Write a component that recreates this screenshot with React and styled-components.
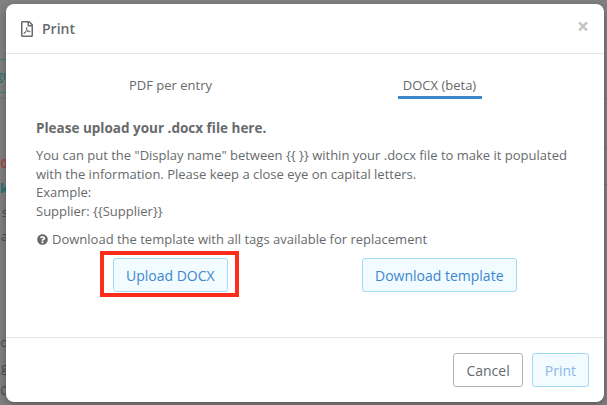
import React from "react";
import styled, { createGlobalStyle } from "styled-components";
import { FaQuestionCircle, FaRegFilePdf } from "react-icons/fa";

const Global = createGlobalStyle`
  html, body {
    margin: 0;
    height: 100%;
    overflow: hidden;
    background: #808080;
    font-family: "Open Sans", "Noto Sans", sans-serif;
  }
`;

const Overlay = styled.div`
  position: relative;
  box-sizing: border-box;
  width: 607px;
  height: 405px;
  overflow: hidden;
  padding: 4px 3px 3px 6px;
  background: #808080;
`;

// what is left of the page behind the dimmed overlay
const Scrap = styled.span`
  position: absolute;
  top: ${(p) => p.$top}px;
  left: 0;
  width: 8px;
  overflow: hidden;
  direction: rtl;
  font-size: 13px;
  line-height: 16px;
  font-weight: ${(p) => (p.$bold ? 700 : 400)};
  color: ${(p) => p.$color || "#4a4a4a"};
`;

const Rule = styled.div`
  position: absolute;
  top: ${(p) => p.$top}px;
  left: ${(p) => (p.$right ? "604px" : "0")};
  width: ${(p) => (p.$right ? "3px" : "6px")};
  height: 1px;
  background: ${(p) => p.$color || "#727272"};
`;

const Modal = styled.div`
  position: relative;
  height: 100%;
  display: flex;
  flex-direction: column;
  background: #fff;
  border-radius: 8px;
  box-shadow: 0 3px 9px rgba(0, 0, 0, 0.3);
`;

const Header = styled.div`
  height: 50px;
  flex: none;
  box-sizing: border-box;
  display: flex;
  align-items: center;
  padding: 0 15px 0 13px;
  border-bottom: 1px solid #e5e5e5;
`;

const Title = styled.h4`
  flex: 1;
  margin: 0 0 0 7px;
  font-size: 14px;
  font-weight: 600;
  color: #676a6c;
`;

const Close = styled.span`
  margin-top: -4px;
  font-size: 21px;
  line-height: 1;
  font-weight: 700;
  color: #c4c4c4;
`;

const Body = styled.div`
  flex: 1;
  padding: 0 30px;
  color: #676a6c;
  font-size: 13px;
  line-height: 18.6px;
`;

const Tabs = styled.div`
  display: grid;
  grid-template-columns: 1fr 1fr;
  margin: 22px 0 0;
  text-align: center;
`;

const Tab = styled.div`
  justify-self: center;
  box-sizing: border-box;
  height: 23px;
  padding: 0 0 2px;
  width: ${(p) => (p.$active ? "84px" : "auto")};
  line-height: 18px;
  white-space: nowrap;
  border-bottom: 3px solid ${(p) => (p.$active ? "#3c87ce" : "transparent")};
  font-size: 13px;
`;

const Heading = styled.p`
  margin: 20px 0 9px;
  font-weight: 700;
  font-size: 13.5px;
  line-height: 18px;
`;

const Text = styled.p`
  margin: 0;
`;

const Hint = styled.p`
  display: flex;
  align-items: center;
  gap: 4px;
  margin: 10px 0 3px;
  padding-left: 1px;
  line-height: 18px;
`;

const Actions = styled.div`
  display: grid;
  grid-template-columns: 1fr 1fr;
`;

const Highlight = styled.div`
  justify-self: start;
  margin-left: 64px;
  padding: 3px 7px 1px 9px;
  border: 4px solid #fe2d1b;
`;

const DownloadSlot = styled.div`
  justify-self: start;
  margin-left: 57px;
  padding-top: 7px;
`;

const Button = styled.button`
  display: block;
  box-sizing: border-box;
  height: 34px;
  padding: 0 12px;
  border: 1px solid #a1dcf7;
  border-radius: 3px;
  background: #f2fbff;
  color: ${(p) => (p.$disabled ? "#8db8e3" : "#3c87ce")};
  font: 400 14px "Open Sans", sans-serif;
`;

const Footer = styled.div`
  height: 65px;
  flex: none;
  box-sizing: border-box;
  display: flex;
  justify-content: flex-end;
  align-items: flex-start;
  gap: 9px;
  padding: 15px 15px 0 0;
  border-top: 1px solid #e5e5e5;
`;

const CancelButton = styled(Button)`
  border-color: #b3b3b3;
  background: #fff;
  color: #676a6c;
`;

const scraps = [
  { top: 67, text: "gr", color: "#2a6f6f" },
  { top: 155, text: "0", color: "#a04a4a", bold: true },
  { top: 180, text: "k", color: "#1f7070", bold: true },
  { top: 204, text: "s" },
  { top: 228, text: "a" },
  { top: 334, text: "o" },
  { top: 359, text: "g" },
  { top: 382, text: "0" },
];

const rules = [
  { top: 59, color: "#3f7f7f" },
  { top: 92, color: "#3f7f7f" },
  { top: 98 },
  { top: 98, right: true },
  { top: 148, right: true },
  { top: 184, right: true },
];

export default function App() {
  return (
    <>
      <Global />
      <Overlay>
        {scraps.map((s) => (
          <Scrap key={s.top} $top={s.top} $color={s.color} $bold={s.bold}>
            {s.text}
          </Scrap>
        ))}
        {rules.map((r) => (
          <Rule key={`${r.top}-${r.right}`} $top={r.top} $color={r.color} $right={r.right} />
        ))}
        <Modal>
          <Header>
            <FaRegFilePdf size={16} color="#676a6c" />
            <Title>Print</Title>
            <Close>×</Close>
          </Header>
          <Body>
            <Tabs>
              <Tab>PDF per entry</Tab>
              <Tab $active>DOCX (beta)</Tab>
            </Tabs>
            <Heading>Please upload your .docx file here.</Heading>
            <Text>
              {'You can put the "Display name" between {{ }} within your .docx file to make it populated with the information. Please keep a close eye on capital letters.'}
              <br />
              Example:
              <br />
              {"Supplier: {{Supplier}}"}
            </Text>
            <Hint>
              <FaQuestionCircle size={11} />
              Download the template with all tags available for replacement
            </Hint>
            <Actions>
              <Highlight>
                <Button>Upload DOCX</Button>
              </Highlight>
              <DownloadSlot>
                <Button>Download template</Button>
              </DownloadSlot>
            </Actions>
          </Body>
          <Footer>
            <CancelButton>Cancel</CancelButton>
            <Button $disabled>Print</Button>
          </Footer>
        </Modal>
      </Overlay>
    </>
  );
}
